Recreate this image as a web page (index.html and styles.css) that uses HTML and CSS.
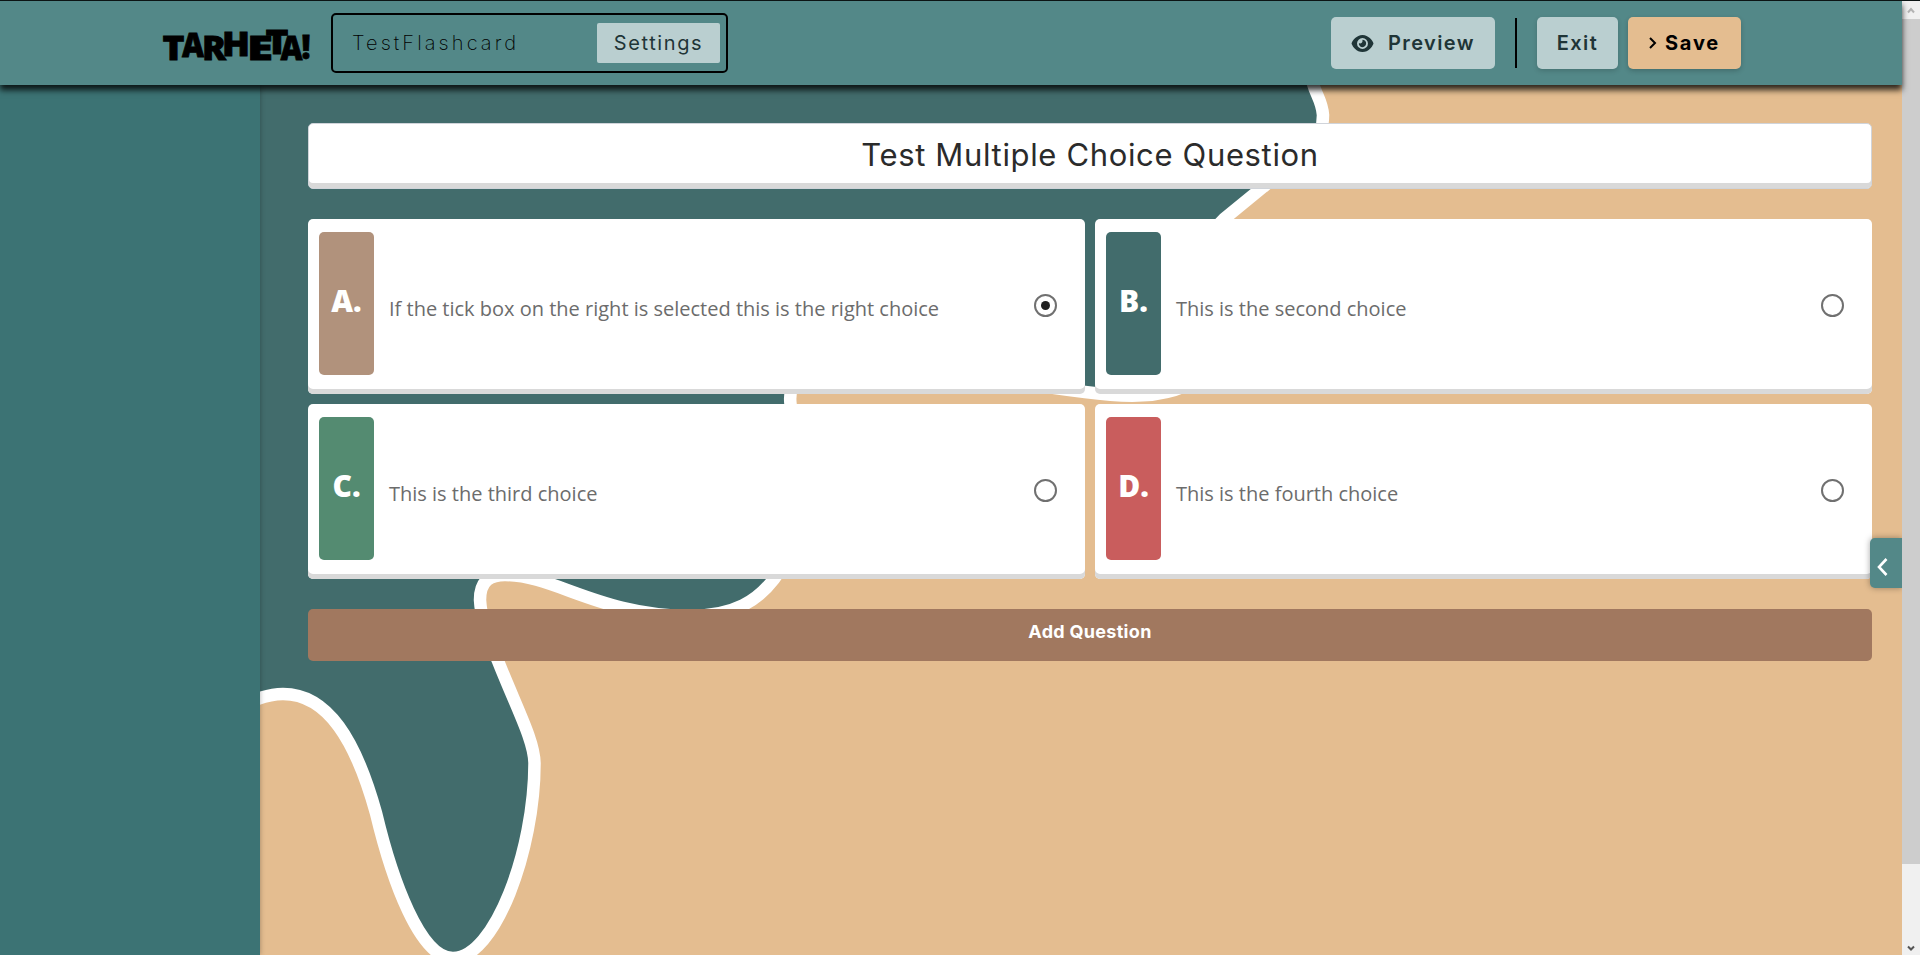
FILE: index.html
```html
<!DOCTYPE html>
<html lang="en">
<head>
<meta charset="utf-8">
<title>Tarheta - Edit Flashcard</title>
<link rel="stylesheet" href="styles.css">
</head>
<body>
<div class="window">
  <div class="page">
    <header class="topbar">
      <svg class="logo" width="150" height="40" viewBox="0 0 150 40" role="img" aria-label="Tarheta!">
        <text class="logo-text"><tspan x="1.500" y="36" textLength="22" lengthAdjust="spacingAndGlyphs">T</tspan><tspan x="21" y="32.500" textLength="22" lengthAdjust="spacingAndGlyphs">A</tspan><tspan x="41" y="36" textLength="24" lengthAdjust="spacingAndGlyphs">R</tspan><tspan x="61" y="32" textLength="28" lengthAdjust="spacingAndGlyphs">H</tspan><tspan x="86" y="36" textLength="26" lengthAdjust="spacingAndGlyphs">E</tspan><tspan x="104.500" y="29.500" textLength="23" lengthAdjust="spacingAndGlyphs">T</tspan><tspan x="119.500" y="36" textLength="22" lengthAdjust="spacingAndGlyphs">A</tspan><tspan x="140.500" y="34.500" textLength="9" lengthAdjust="spacingAndGlyphs">!</tspan></text>
      </svg>
      <div class="deck">
        <span class="deck-name">TestFlashcard</span>
        <button class="settings">Settings</button>
      </div>
      <nav class="actions">
        <button class="btn preview">
          <svg width="23" height="17" viewBox="0 32 576 448"><path fill="currentColor" d="M288 32c-80.800 0-145.500 36.800-192.600 80.600C48.600 156 17.300 208 2.500 243.700c-3.300 7.900-3.300 16.700 0 24.600C17.300 304 48.600 356 95.400 399.400C142.500 443.200 207.200 480 288 480s145.500-36.800 192.600-80.600c46.800-43.500 78.100-95.400 93-131.100c3.300-7.900 3.300-16.700 0-24.600c-14.900-35.700-46.200-87.700-93-131.100C433.500 68.800 368.800 32 288 32zM144 256a144 144 0 1 1 288 0 144 144 0 1 1-288 0zm144-64c0 35.300-28.700 64-64 64c-7.100 0-13.900-1.200-20.300-3.300c-5.500-1.800-11.900 1.600-11.700 7.400c.3 6.900 1.300 13.800 3.200 20.700c13.700 51.200 66.400 81.600 117.600 67.900s81.600-66.400 67.900-117.600c-11.100-41.500-47.800-69.400-88.600-71.100c-5.800-.2-9.200 6.100-7.400 11.700c2.100 6.400 3.300 13.200 3.300 20.300z"/></svg>
          <span>Preview</span>
        </button>
        <span class="divider"></span>
        <button class="btn exit">Exit</button>
        <button class="btn save"><svg width="8" height="12" viewBox="0 0 8 12"><path d="M1 1l5 5-5 5" fill="none" stroke="currentColor" stroke-width="2"/></svg><span>Save</span></button>
      </nav>
    </header>
    <div class="body">
      <aside class="sidebar"></aside>
      <main class="editor">
        <svg class="backdrop" width="1642" height="870" viewBox="260 85 1642 870" aria-hidden="true">
          <path class="wave" d="M200 740C235 705 262 694 283 694C328 694 356 741 376 813C392 880 420 958 453 958C495 958 534.500 850 534.500 763C534 740 517 709 498 661C490 641 481 620 480 600C480 580 491 575 505 575C555 575 600 616 690 616C735 616 758 600 774 579C810 530 800 480 790.500 404C785 360 850 350 900 360C960 370 1000 382 1085 392C1130 398 1160 397 1185 386C1220 370 1140 300 1224 219L1263 187C1310 150 1323 140 1323 115C1322 100 1315 94 1312 80L1300 0L200 0Z"/>
        </svg>
        <h1 class="question"><span>Test Multiple Choice Question</span></h1>
        <section class="choices">
          <label class="choice">
            <span class="badge badge-a">A.</span>
            <span class="answer">If the tick box on the right is selected this is the right choice</span>
            <span class="radio checked"></span>
          </label>
          <label class="choice">
            <span class="badge badge-b">B.</span>
            <span class="answer">This is the second choice</span>
            <span class="radio"></span>
          </label>
          <label class="choice">
            <span class="badge badge-c">C.</span>
            <span class="answer">This is the third choice</span>
            <span class="radio"></span>
          </label>
          <label class="choice">
            <span class="badge badge-d">D.</span>
            <span class="answer">This is the fourth choice</span>
            <span class="radio"></span>
          </label>
        </section>
        <button class="add">Add Question</button>
        <button class="drawer" aria-label="Open panel"><svg width="12" height="18" viewBox="0 0 12 18"><path d="M10.500 1L3 9l7.500 8" fill="none" stroke="#fff" stroke-width="2.600"/></svg></button>
      </main>
    </div>
  </div>
  <div class="scrollbar">
    <span class="arrow arrow-up"><svg width="8" height="7" viewBox="0 0 8 7"><path d="M1 5.500l3-3.500 3 3.500" fill="none" stroke="#b3b3b3" stroke-width="2"/></svg></span>
    <span class="thumb"></span>
    <span class="arrow arrow-down"><svg width="8" height="7" viewBox="0 0 8 7"><path d="M1 1.500l3 3 3-3" fill="none" stroke="#555" stroke-width="2"/></svg></span>
  </div>
</div>
</body>
</html>
```
FILE: styles.css
```css
* { box-sizing: border-box; }
body { margin: 0; height: 955px; overflow: hidden; font-family: Inter, "Open Sans", sans-serif; }
button { border: 0; padding: 0; margin: 0; font-family: inherit; }

.window { display: flex; height: 955px; }
.page { width: 1902px; display: flex; flex-direction: column; }

.topbar {
  height: 85px; flex: none; position: relative; z-index: 2;
  display: flex; align-items: center;
  padding: 0 161px;
  background: #538888; border-top: 1px solid #0c1414;
  box-shadow: 0 5px 6px rgba(0, 0, 0, .8);
}
.logo { width: 150px; height: 40px; margin-right: 20px; margin-top: 2px; overflow: visible; }
.logo-text { font: 800 34px "Open Sans", sans-serif; fill: #000; stroke: #000; stroke-width: .8px; }
.deck {
  width: 397px; height: 60px; border: 2px solid #000; border-radius: 5px;
  display: flex; align-items: center; justify-content: space-between;
  padding: 0 6px 0 19px;
}
.deck-name { font-weight: 200; font-size: 20px; letter-spacing: 3.1px; color: #000; }
.settings {
  width: 123px; height: 40px; border-radius: 2px; background: #bacfd0; color: #1f3537;
  font-size: 20px; font-weight: 400; letter-spacing: 1.6px;
}
.actions { margin-left: auto; display: flex; align-items: center; }
.btn {
  height: 52px; border-radius: 5px; background: #bacfd0; color: #1f3537;
  font-size: 20px; font-weight: 600; letter-spacing: 1.4px;
  display: flex; align-items: center; justify-content: center;
}
.preview { width: 164px; gap: 14px; }
.divider { width: 2px; height: 50px; margin: 0 20px; background: #000; }
.exit { width: 81px; margin-right: 10px; box-shadow: 0 2px 5px rgba(0, 0, 0, .16); }
.save { width: 113px; gap: 8px; background: #e4bd90; color: #000; font-weight: 700; letter-spacing: 1.8px; box-shadow: 0 2px 5px rgba(0, 0, 0, .2); }

.body { flex: 1; display: flex; }
.sidebar { width: 260px; flex: none; position: relative; background: #3c7374; box-shadow: 0 0 5px rgba(0, 0, 0, .3); z-index: 1; }
.editor {
  flex: 1; position: relative; padding: 38px 30px 0 48px;
  display: flex; flex-direction: column; background: #e4bd90; overflow: hidden;
}
.backdrop { position: absolute; left: 0; top: 0; }
.wave { fill: #426c6c; stroke: #fff; stroke-width: 12.500px; }

.question {
  position: relative; margin: 0; height: 66px; border: 1px solid #d0d4da; border-radius: 5px;
  background: #fff; box-shadow: inset 0 -5px 0 #d9d9d9;
  display: flex; align-items: center; justify-content: center; padding-bottom: 3px;
  font-size: 31px; font-weight: 400; letter-spacing: .65px; color: #2b2b2b;
}
.choices {
  position: relative; margin-top: 30px;
  display: grid; grid-template-columns: 1fr 1fr; grid-auto-rows: 175px; gap: 10px;
}
.choice {
  display: flex; align-items: center; padding: 0 28px 5px 11px;
  background: #fff; border-radius: 5px; box-shadow: inset 0 -5px 0 #d9d9d9;
}
.badge {
  width: 55px; height: 143px; margin-bottom: 2px; border-radius: 5px; color: #fff;
  font: 800 30px "Open Sans", sans-serif; display: flex; align-items: center; justify-content: center;
  padding-bottom: 6px;
}
.badge-a { background: #b1927c; }
.badge-b { background: #426c6c; }
.badge-c { background: #548b71; }
.badge-d { background: #c95d5d; }
.answer { flex: 1; margin-left: 15px; padding-top: 8px; font: 400 20px "Open Sans", sans-serif; color: #6c6c6c; }
.radio {
  width: 23px; height: 23px; border: 2px solid #707070; border-radius: 50%;
  display: flex; align-items: center; justify-content: center; margin-top: 2px;
}
.checked::after { content: ""; width: 9px; height: 9px; border-radius: 50%; background: #212121; }
.add {
  position: relative; margin-top: 30px; height: 52px; border-radius: 5px; background: #a1785f; color: #fff;
  font-size: 18px; font-weight: 700; letter-spacing: .3px; padding-bottom: 7px;
}
.drawer {
  position: absolute; right: 0; top: 453px; width: 32px; height: 50px;
  border-radius: 5px 0 0 5px; background: #538888; box-shadow: 0 0 6px rgba(0, 0, 0, .35);
  display: flex; align-items: center; padding: 7px 0 0 6px;
}

.scrollbar { width: 18px; display: flex; flex-direction: column; background: #f0f0f0; border-top: 1px solid #0c1414; }
.arrow { height: 18px; flex: none; display: flex; align-items: center; justify-content: center; }
.thumb { height: 845px; background: #cdcdcd; }
.arrow-down { margin-top: auto; height: 14px; }
```
